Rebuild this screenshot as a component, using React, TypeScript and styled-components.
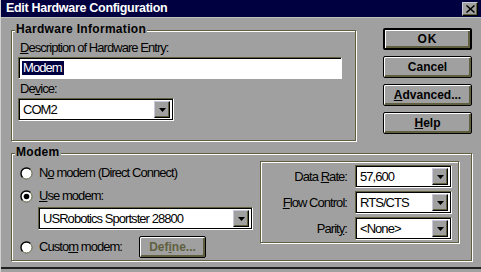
import React from "react";
import styled, { createGlobalStyle } from "styled-components";

// ______________________________________________________
// colours

const FACE = "#a0a0a0";
const SHADOW = "#606040";
const TITLE = "#000040";
const LIGHT = "#c8c8d8";
const FONT = `"Liberation Sans", Arial, sans-serif`;

const GlobalStyle = createGlobalStyle`
  html, body { margin: 0; padding: 0; background: ${FACE}; }
  body { font-family: ${FONT}; font-size: 13px; letter-spacing: -0.95px; color: #000; }
`;

// ______________________________________________________
// window

const Window = styled.div`
  width: 481px;
  height: 272px;
  box-sizing: border-box;
  background: ${FACE};
  border-left: 1px solid #d0d0d0;
  display: flex;
  flex-direction: column;
  overflow: hidden;
`;

const TitleBar = styled.div`
  height: 17px;
  background: ${TITLE};
  border-bottom: 1px solid #c0c0c0;
  display: flex;
  align-items: center;
  justify-content: space-between;
  padding: 0 3px 0 5px;
`;

const TitleText = styled.span`
  color: #fff;
  font-weight: bold;
  font-size: 12.5px;
  letter-spacing: -0.3px;
  line-height: 17px;
`;

const CloseBox = styled.div`
  box-sizing: border-box;
  width: 16px;
  height: 14px;
  background: ${FACE};
  border: 1px solid;
  border-color: ${LIGHT} #000 #000 ${LIGHT};
  box-shadow: inset -1px -1px 0 ${SHADOW};
  display: flex;
  align-items: center;
  justify-content: center;
`;

const Content = styled.div`
  flex: 1;
  display: flex;
  flex-direction: column;
  padding: 0 0 0 10px;
`;

const TopRow = styled.div`
  display: flex;
  margin-top: 12px;
`;

const BottomEdge = styled.div`
  height: 2px;
  margin-bottom: 3px;
  background: #202020;
`;

// ______________________________________________________
// group boxes

const Group = styled.div<{ $w: number; $h: number }>`
  position: relative;
  box-sizing: border-box;
  width: ${(p) => p.$w}px;
  height: ${(p) => p.$h}px;
  border: 1px solid ${SHADOW};
  box-shadow: inset 1px 1px 0 #fff, 1px 1px 0 #fff;
`;

const Legend = styled.span`
  position: absolute;
  top: -9px;
  left: 3px;
  padding: 0 1px;
  background: ${FACE};
  font-weight: bold;
  font-size: 12px;
  letter-spacing: 0.3px;
  line-height: 15px;
`;

const HardwareBody = styled.div`
  display: flex;
  flex-direction: column;
  padding: 10px 13px 0 6px;
`;

const FieldLabel = styled.div`
  line-height: 14px;
  padding-left: 2px;
  margin-bottom: 2px;
`;

const TextInput = styled.div`
  box-sizing: border-box;
  height: 22px;
  border: 1px solid;
  border-color: ${SHADOW} #fff #fff ${SHADOW};
  box-shadow: inset 1px 1px 0 #000;
  background: #fff;
  display: flex;
  align-items: center;
  padding-left: 3px;
  margin-bottom: 3px;
`;

const Selected = styled.span`
  background: ${TITLE};
  color: #fff;
  line-height: 14px;
  padding: 0 2px 0 1px;
`;

// ______________________________________________________
// combo box

const ComboBox = styled.div<{ $w: number }>`
  box-sizing: border-box;
  width: ${(p) => p.$w}px;
  height: 23px;
  border: 1px solid;
  border-color: ${SHADOW} #fff #fff ${SHADOW};
  box-shadow: inset 1px 1px 0 #000, inset -1px -1px 0 #000;
  background: #fff;
  display: flex;
  align-items: center;
  padding: 2px 3px 2px 4px;
`;

const ComboText = styled.span`
  flex: 1;
  line-height: 15px;
  white-space: nowrap;
`;

const ArrowButton = styled.div`
  box-sizing: border-box;
  width: 16px;
  height: 17px;
  background: ${FACE};
  border: 1px solid;
  border-color: ${LIGHT} #000 #000 ${LIGHT};
  box-shadow: inset -1px -1px 0 ${SHADOW};
  display: flex;
  align-items: center;
  justify-content: center;
`;

const Combo = ({ width, value }: { width: number; value: string }) => (
  <ComboBox $w={width}>
    <ComboText>{value}</ComboText>
    <ArrowButton>
      <svg width="7" height="4" viewBox="0 0 7 4">
        <path d="M0 0H7L3.5 4Z" fill="#000" />
      </svg>
    </ArrowButton>
  </ComboBox>
);

// ______________________________________________________
// push buttons

const ButtonColumn = styled.div`
  display: flex;
  flex-direction: column;
  gap: 6px;
  margin: -2px 0 0 27px;
`;

const PushButton = styled.div<{ $default?: boolean; $disabled?: boolean; $w?: number }>`
  box-sizing: border-box;
  width: ${(p) => p.$w ?? 89}px;
  height: 22px;
  border: ${(p) => (p.$default ? 2 : 1)}px solid #000;
  border-radius: 2px;
  background: ${FACE};
  box-shadow: inset 1px 1px 0 #fff, inset -2px -2px 0 ${SHADOW};
  display: flex;
  align-items: center;
  justify-content: center;
  font-weight: bold;
  font-size: 12px;
  color: ${(p) => (p.$disabled ? SHADOW : "#000")};
  letter-spacing: ${(p) => (p.$default ? "1px" : "0")};
`;

// ______________________________________________________
// modem section

const ModemGrid = styled.div`
  display: flex;
  padding: 0 0 0 8px;
`;

const LeftCol = styled.div`
  display: flex;
  flex-direction: column;
  width: 240px;
  padding-top: 12px;
`;

const RadioRow = styled.div<{ $gap?: number }>`
  display: flex;
  align-items: center;
  height: 14px;
  margin-bottom: ${(p) => p.$gap ?? 0}px;
`;

const RadioLabel = styled.span<{ $w?: number }>`
  margin-left: 6px;
  line-height: 14px;
  width: ${(p) => (p.$w ? `${p.$w}px` : "auto")};
`;

const Indent = styled.div`
  padding-left: 18px;
  margin: 4px 0 6px;
`;

const CustomRow = styled.div`
  display: flex;
  align-items: center;
`;

const InnerFrame = styled.div`
  box-sizing: border-box;
  width: 199px;
  height: 82px;
  margin: 7px 0 0 0;
  border: 1px solid ${SHADOW};
  box-shadow: inset 1px 1px 0 #fff, 1px 1px 0 #fff;
  padding: 3px 0 0 0;
  display: grid;
  grid-template-columns: 86px 97px;
  column-gap: 8px;
  row-gap: 3px;
  align-items: center;
  align-content: start;
`;

const SettingLabel = styled.span`
  text-align: right;
  line-height: 14px;
`;

const Radio = ({ checked }: { checked?: boolean }) => (
  <svg width="13" height="13" viewBox="0 0 13 13">
    <circle cx="6.5" cy="6.5" r="5.5" fill="#fff" />
    <path d="M2.6 10.4A5.5 5.5 0 0 1 10.4 2.6" fill="none" stroke="#000" strokeWidth="1.4" />
    <path d="M10.4 2.6A5.5 5.5 0 0 1 2.6 10.4" fill="none" stroke={SHADOW} strokeWidth="1" />
    {checked && <circle cx="6.5" cy="6.5" r="2.8" fill="#000" />}
  </svg>
);

const U = styled.span`
  text-decoration: underline;
  text-underline-offset: 1px;
`;

// ______________________________________________________
// app

export default function App() {
  return (
    <>
      <GlobalStyle />
      <Window>
        <TitleBar>
          <TitleText>Edit Hardware Configuration</TitleText>
          <CloseBox>
            <svg width="9" height="8" viewBox="0 0 9 8">
              <path d="M0.5 0.5L8.5 7.5M8.5 0.5L0.5 7.5" stroke="#000" strokeWidth="1.5" />
            </svg>
          </CloseBox>
        </TitleBar>
        <Content>
          <TopRow>
            <Group $w={345} $h={111}>
              <Legend>Hardware Information</Legend>
              <HardwareBody>
                <FieldLabel>
                  <U>D</U>escription of Hardware Entry:
                </FieldLabel>
                <TextInput>
                  <Selected>Modem</Selected>
                </TextInput>
                <FieldLabel>
                  De<U>v</U>ice:
                </FieldLabel>
                <Combo width={156} value="COM2" />
              </HardwareBody>
            </Group>
            <ButtonColumn>
              <PushButton $default>OK</PushButton>
              <PushButton>Cancel</PushButton>
              <PushButton>
                <U>A</U>dvanced...
              </PushButton>
              <PushButton>
                <U>H</U>elp
              </PushButton>
            </ButtonColumn>
          </TopRow>

          <Group $w={461} $h={108} style={{ marginTop: 12 }}>
            <Legend>Modem</Legend>
            <ModemGrid>
              <LeftCol>
                <RadioRow $gap={9}>
                  <Radio />
                  <RadioLabel>
                    N<U>o</U> modem (Direct Connect)
                  </RadioLabel>
                </RadioRow>
                <RadioRow>
                  <Radio checked />
                  <RadioLabel>
                    <U>U</U>se modem:
                  </RadioLabel>
                </RadioRow>
                <Indent>
                  <Combo width={215} value="USRobotics Sportster 28800" />
                </Indent>
                <CustomRow>
                  <Radio />
                  <RadioLabel $w={100}>
                    Custo<U>m</U> modem:
                  </RadioLabel>
                  <PushButton $disabled $w={67}>
                    Def<U>i</U>ne...
                  </PushButton>
                </CustomRow>
              </LeftCol>
              <InnerFrame>
                <SettingLabel>
                  Data <U>R</U>ate:
                </SettingLabel>
                <Combo width={97} value="57,600" />
                <SettingLabel>
                  <U>F</U>low Control:
                </SettingLabel>
                <Combo width={97} value="RTS/CTS" />
                <SettingLabel>
                  Parit<U>y</U>:
                </SettingLabel>
                <Combo width={97} value="<None>" />
              </InnerFrame>
            </ModemGrid>
          </Group>
          <div style={{ flex: 1 }} />
        </Content>
        <BottomEdge />
      </Window>
    </>
  );
}
